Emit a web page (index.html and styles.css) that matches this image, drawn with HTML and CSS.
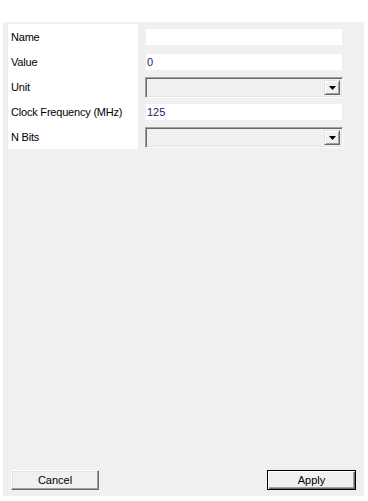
FILE: index.html
```
<!DOCTYPE html>
<html lang="en">
<head>
    <meta charset="UTF-8">
    <meta name="viewport" content="width=device-width, initial-scale=1.0">
    <title>Properties</title>
    <link rel="stylesheet" href="styles.css">
</head>
<body>
    <div class="panel">
        <div class="form">
            <div class="labels">
                <div class="label">Name</div>
                <div class="label">Value</div>
                <div class="label">Unit</div>
                <div class="label">Clock Frequency (MHz)</div>
                <div class="label">N Bits</div>
            </div>
            <div class="fields">
                <div class="row"><input class="text-field" type="text" value=""></div>
                <div class="row"><input class="text-field" type="text" value="0"></div>
                <div class="row combo-row">
                    <div class="combo">
                        <span class="combo-btn">
                            <svg width="7" height="4" viewBox="0 0 7 4"><polygon points="0,0 7,0 3.5,4" fill="#000"/></svg>
                        </span>
                    </div>
                </div>
                <div class="row"><input class="text-field" type="text" value="125"></div>
                <div class="row combo-row">
                    <div class="combo">
                        <span class="combo-btn">
                            <svg width="7" height="4" viewBox="0 0 7 4"><polygon points="0,0 7,0 3.5,4" fill="#000"/></svg>
                        </span>
                    </div>
                </div>
            </div>
        </div>

        <div class="buttons">
            <button class="btn">Cancel</button>
            <button class="btn btn-default">Apply</button>
        </div>
    </div>
</body>
</html>
```

FILE: styles.css
```
* {
    margin: 0;
    padding: 0;
    box-sizing: border-box;
}

body {
    font-family: 'Liberation Sans', Arial, sans-serif;
    font-size: 11px;
    background-color: #ffffff;
    color: #000;
}

.panel {
    margin: 22px 4px 0 3px;
    height: 474px;
    background-color: #f0f0f0;
    display: flex;
    flex-direction: column;
    justify-content: space-between;
    padding: 2px 8px 6px 5px;
}

.form {
    display: flex;
}

.labels {
    width: 130px;
    background-color: #ffffff;
}

.label {
    height: 25px;
    line-height: 26px;
    padding-left: 3px;
    white-space: nowrap;
    letter-spacing: -0.2px;
}

.fields {
    margin-left: 8px;
    width: 197px;
}

.row {
    height: 25px;
    padding-top: 5px;
}

.combo-row {
    padding-top: 3px;
}

.text-field {
    display: block;
    width: 196px;
    height: 16px;
    border: none;
    outline: none;
    background-color: #ffffff;
    font-family: inherit;
    font-size: 11px;
    color: #0b2a66;
    padding: 0 1px;
}

.combo {
    width: 198px;
    height: 21px;
    margin-left: -1px;
    background-color: #f0f0f0;
    border-top: 1px solid #a0a0a0;
    border-left: 1px solid #a0a0a0;
    border-right: 1px solid #ffffff;
    border-bottom: 1px solid #ffffff;
    box-shadow: inset 1px 1px 0 #696969, inset -1px -1px 0 #e3e3e3;
    display: flex;
    justify-content: flex-end;
    padding: 2px;
}

.combo-btn {
    width: 16px;
    height: 15px;
    background-color: #f0f0f0;
    border-top: 1px solid #e3e3e3;
    border-left: 1px solid #e3e3e3;
    border-right: 1px solid #696969;
    border-bottom: 1px solid #696969;
    box-shadow: inset 1px 1px 0 #ffffff, inset -1px -1px 0 #a0a0a0;
    display: flex;
    align-items: center;
    justify-content: center;
}

.buttons {
    display: flex;
    justify-content: space-between;
    padding-left: 3px;
}

.btn {
    width: 88px;
    height: 20px;
    font-family: inherit;
    font-size: 11px;
    color: #000;
    background-color: #f0f0f0;
    border-top: 1px solid #ffffff;
    border-left: 1px solid #ffffff;
    border-right: 1px solid #696969;
    border-bottom: 1px solid #696969;
    box-shadow: inset -1px -1px 0 #a0a0a0, inset 1px 1px 0 #e3e3e3;
}

.btn-default {
    width: 89px;
    border: 1px solid #000;
    box-shadow: inset 1px 1px 0 #ffffff, inset -1px -1px 0 #696969, inset -2px -2px 0 #a0a0a0;
}
```
